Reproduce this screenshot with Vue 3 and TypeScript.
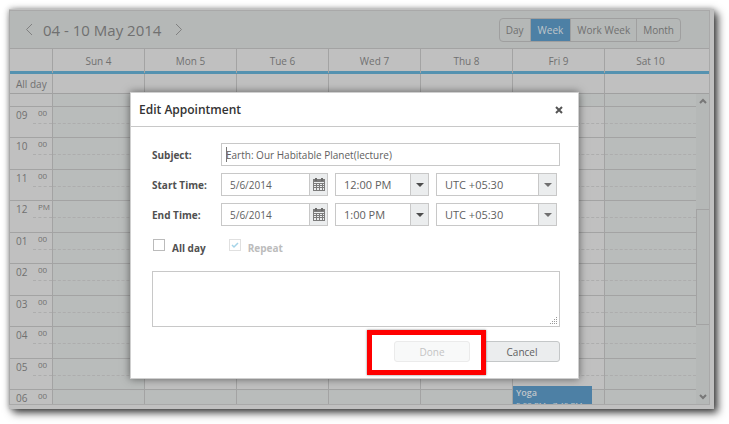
<script setup lang="ts">
import { ref } from 'vue'

type View = 'Day' | 'Week' | 'Work Week' | 'Month'

const views: View[] = ['Day', 'Week', 'Work Week', 'Month']
const activeView = ref<View>('Week')
const days = ['Sun 4', 'Mon 5', 'Tue 6', 'Wed 7', 'Thu 8', 'Fri 9', 'Sat 10']

interface Hour { label: string; suffix: string; working: boolean }
const hours: Hour[] = [
  { label: '09', suffix: '00', working: true },
  { label: '10', suffix: '00', working: true },
  { label: '11', suffix: '00', working: true },
  { label: '12', suffix: 'PM', working: true },
  { label: '01', suffix: '00', working: true },
  { label: '02', suffix: '00', working: true },
  { label: '03', suffix: '00', working: true },
  { label: '04', suffix: '00', working: true },
  { label: '05', suffix: '00', working: true },
  { label: '06', suffix: '00', working: false },
]

const subject = ref('Earth: Our Habitable Planet(lecture)')
const slots = ref([
  { id: 'start', label: 'Start Time:', date: '5/6/2014', time: '12:00 PM', zone: 'UTC +05:30' },
  { id: 'end', label: 'End Time:', date: '5/6/2014', time: '1:00 PM', zone: 'UTC +05:30' },
])
const allDay = ref(false)
const repeat = ref(true)
const notes = ref('')

const isWeekend = (index: number) => index === 0 || index === 6
</script>

<template>
  <div class="page">
    <div class="frame">
      <section class="scheduler">
        <header class="toolbar">
          <button class="nav" type="button" aria-label="Previous week">
            <svg width="8" height="13" viewBox="0 0 8 13"><path d="M7 1 1.5 6.5 7 12" /></svg>
          </button>
          <h1>04 - 10 May 2014</h1>
          <button class="nav" type="button" aria-label="Next week">
            <svg width="8" height="13" viewBox="0 0 8 13"><path d="M1 1 6.5 6.5 1 12" /></svg>
          </button>
          <div class="views">
            <button
              v-for="view in views"
              :key="view"
              type="button"
              :class="{ active: view === activeView }"
              @click="activeView = view"
            >{{ view }}</button>
          </div>
        </header>

        <div class="row day-row">
          <div></div>
          <div v-for="day in days" :key="day" class="day">{{ day }}</div>
        </div>
        <div class="row all-day-row">
          <div class="all-day">All day</div>
          <div v-for="day in days" :key="day" class="day"></div>
        </div>

        <div class="body">
          <div class="hours">
            <div class="hour-row">
              <div class="time"></div>
              <div v-for="day in days" :key="day" class="cell off"></div>
            </div>
            <div v-for="hour in hours" :key="hour.label" class="hour-row">
              <div class="time half">
                <span>{{ hour.label }}</span><small>{{ hour.suffix }}</small>
              </div>
              <div
                v-for="(day, i) in days"
                :key="day"
                class="cell half"
                :class="{ off: isWeekend(i) || !hour.working }"
              >
                <div v-if="hour.label === '05' && day === 'Fri 9'" class="event">
                  <strong>Yoga</strong>
                  <span>5:50 PM - 7:45 PM</span>
                </div>
              </div>
            </div>
          </div>
          <div class="scrollbar">
            <button type="button" aria-label="Scroll up">
              <svg width="8" height="6" viewBox="0 0 8 6"><path d="M1 5 4 2l3 3" /></svg>
            </button>
            <div class="track"><div class="thumb"></div></div>
            <button type="button" aria-label="Scroll down">
              <svg width="8" height="6" viewBox="0 0 8 6"><path d="M1 1l3 3 3-3" /></svg>
            </button>
          </div>
        </div>
      </section>
    </div>

    <form class="dialog" role="dialog" aria-labelledby="dialog-title" @submit.prevent>
      <header class="dialog-head">
        <h2 id="dialog-title">Edit Appointment</h2>
        <button type="button" class="close" aria-label="Close">
          <svg width="8" height="8" viewBox="0 0 8 8"><path d="M1 1l6 6M7 1 1 7" /></svg>
        </button>
      </header>
      <div class="dialog-body">
        <div class="field">
          <label for="subject">Subject:</label>
          <div class="box subject">
            <input id="subject" v-model="subject" type="text" />
            <i class="caret"></i>
          </div>
        </div>
        <div v-for="slot in slots" :key="slot.id" class="field">
          <label :for="slot.id">{{ slot.label }}</label>
          <div class="box date">
            <input :id="slot.id" v-model="slot.date" type="text" />
            <button type="button" class="addon" aria-label="Pick a date">
              <svg width="12" height="13" viewBox="0 0 12 13">
                <path d="M0 1h12v12H0z" fill="#7c7c7c" />
                <path d="M2 0h2v3H2zM8 0h2v3H8z" fill="#6b6b6b" />
                <path d="M1 4h10v1H1zM1 6h2v1H1zM4 6h2v1H4zM7 6h2v1H7zM10 6h1v1h-1zM1 8h2v1H1zM4 8h2v1H4zM7 8h2v1H7zM10 8h1v1h-1zM1 10h2v2H1zM4 10h2v2H4zM7 10h2v2H7zM10 10h1v2h-1z" fill="#ebedee" />
              </svg>
            </button>
          </div>
          <div class="box time-box">
            <select v-model="slot.time" aria-label="Time">
              <option>12:00 PM</option>
              <option>1:00 PM</option>
            </select>
            <span class="addon"><svg width="8" height="4" viewBox="0 0 8 4"><path d="M0 0h8L4 4z" fill="#4c4c4c" /></svg></span>
          </div>
          <div class="box zone">
            <select v-model="slot.zone" aria-label="Time zone">
              <option>UTC +05:30</option>
            </select>
            <span class="addon"><svg width="8" height="4" viewBox="0 0 8 4"><path d="M0 0h8L4 4z" fill="#707070" /></svg></span>
          </div>
        </div>
        <div class="checks">
          <label><input v-model="allDay" type="checkbox" /><span>All day</span></label>
          <label class="disabled"><input v-model="repeat" type="checkbox" disabled /><span>Repeat</span></label>
        </div>
        <div class="notes">
          <textarea v-model="notes" aria-label="Description"></textarea>
          <svg width="8" height="8" viewBox="0 0 8 8"><path d="M6 0h1v1H6zM4 2h1v1H4zM6 2h1v1H6zM2 4h1v1H2zM4 4h1v1H4zM6 4h1v1H6zM0 6h1v1H0zM2 6h1v1H2zM4 6h1v1H4zM6 6h1v1H6z" fill="#999" /></svg>
        </div>
        <footer class="actions">
          <div class="done">
            <button type="submit" disabled>Done</button>
            <span class="highlight"></span>
          </div>
          <button type="button">Cancel</button>
        </footer>
      </div>
    </form>
  </div>
</template>

<style>
body {
  background: #fff;
}
</style>

<style scoped>
* {
  box-sizing: border-box;
}
.page {
  position: relative;
  height: 100vh;
  padding: 9px 15px 15px 9px;
  font: 10px/16px "Open Sans", "Noto Sans", sans-serif;
  color: #707070;
}
button,
input,
select,
textarea {
  font: inherit;
  color: inherit;
  margin: 0;
  padding: 0;
  border: 0;
  background: none;
  border-radius: 0;
  outline: none;
}
svg {
  display: block;
}
.frame {
  height: 100%;
  padding: 1px 4px 4px 0;
  background: #c0c0c0;
  box-shadow: 4px 4px 8px rgba(0, 0, 0, 0.7), 0 0 6px rgba(0, 0, 0, 0.35);
}
.scheduler {
  height: 100%;
  display: flex;
  flex-direction: column;
  border: 1px solid #a9a9a9;
  background: #c0c0c0;
}
.toolbar {
  flex: none;
  display: flex;
  align-items: center;
  height: 38px;
  padding: 0 28px 0 15px;
  border-bottom: 1px solid #a3a3a3;
  background: #b5b8b7;
}
.nav path {
  fill: none;
  stroke: #808080;
}
.toolbar h1 {
  margin: 0 14px 0 10px;
  font-size: 15px;
  line-height: 22px;
  font-weight: 400;
  color: #707070;
}
.views {
  display: flex;
  height: 24px;
  margin-left: auto;
  border: 1px solid #9f9f9f;
  border-radius: 4px;
  overflow: hidden;
}
.views button {
  padding: 0 6px;
}
.views button + button {
  border-left: 1px solid #a0a0a0;
}
.views .active {
  padding: 0 7px;
  background: #4d80a5;
  color: #c0c6ca;
}
.row {
  flex: none;
  display: grid;
  grid-template-columns: 42px repeat(7, 1fr);
  padding-right: 13px;
}
.row .day {
  border-left: 1px solid #a3a3a3;
  text-align: center;
}
.day-row {
  height: 25px;
  line-height: 24px;
  border-bottom: 3px solid #5592b0;
}
.all-day-row {
  height: 20px;
  line-height: 20px;
  border-bottom: 1px solid #a0a0a0;
}
.all-day {
  padding-left: 6px;
  white-space: nowrap;
}
.body {
  flex: 1;
  min-height: 0;
  display: flex;
  overflow: hidden;
}
.hours {
  flex: 1;
  display: grid;
  grid-template-rows: 13px;
  grid-auto-rows: 31px 32px;
}
.hour-row {
  display: grid;
  grid-template-columns: 42px repeat(7, 1fr);
  border-bottom: 1px solid #a3a3a3;
}
.cell {
  position: relative;
  border-left: 1px solid #a3a3a3;
}
.off {
  background: #b9bcbb;
}
.half::before {
  content: "";
  display: block;
  height: 16px;
  border-bottom: 1px dashed #adadad;
}
.time {
  display: grid;
  grid-template-columns: 23px 19px;
  color: #707070;
}
.time.half::before {
  grid-area: 1 / 2;
}
.time span {
  grid-area: 1 / 1;
  padding-left: 6px;
  height: 16px;
  line-height: 16px;
}
.time small {
  grid-area: 1 / 2;
  padding-left: 5px;
  font-size: 8px;
  line-height: 12px;
}
.event {
  position: absolute;
  z-index: 1;
  top: 27px;
  left: 0;
  width: 79px;
  height: 60px;
  padding: 1px 3px;
  background: #4d80a5;
  color: #c0c6ca;
  font-size: 8px;
  line-height: 11px;
  white-space: nowrap;
}
.event strong,
.event span {
  display: block;
}
.event strong {
  font-size: 9px;
  line-height: 12px;
  font-weight: 600;
}
.scrollbar {
  flex: none;
  width: 13px;
  display: flex;
  flex-direction: column;
  background: #b5b8b7;
}
.scrollbar button {
  height: 14px;
  display: grid;
  place-items: center;
}
.scrollbar path {
  fill: none;
  stroke: #777;
  stroke-width: 2;
}
.track {
  flex: 1;
  display: grid;
  grid-template-rows: 101fr 117fr 65fr;
}
.thumb {
  grid-row: 2;
  border: 1px solid #a3a3a3;
  border-right: 0;
}
.dialog {
  position: absolute;
  top: 92px;
  left: 130px;
  width: 449px;
  border: 1px solid #cfcfcf;
  background: #fff;
  color: #606060;
  box-shadow: 0 0 8px rgba(0, 0, 0, 0.5);
}
.dialog-head {
  display: flex;
  align-items: center;
  justify-content: space-between;
  height: 34px;
  padding: 0 15px 0 8px;
  border-bottom: 1px solid #c8c8c8;
}
.dialog-head h2 {
  margin: 0;
  font-size: 12px;
  line-height: 16px;
  font-weight: 600;
  color: #333;
}
.close path {
  stroke: #555;
  stroke-width: 2;
}
.dialog-body {
  padding: 16px 18px 16px 21px;
}
.field {
  display: flex;
  gap: 7px;
  height: 23px;
  margin-bottom: 7px;
}
.field > label {
  flex: none;
  width: 62px;
  line-height: 25px;
  font-weight: 700;
  color: #505050;
}
.box {
  flex: none;
  display: grid;
  grid-template-columns: 1fr 18px;
  border: 1px solid #c8c8c8;
  background: #fff;
}
.box input,
.box select {
  grid-area: 1 / 1;
  min-width: 0;
  width: 100%;
  padding-left: 8px;
}
.box select {
  grid-area: 1 / 1 / 2 / 3;
  appearance: none;
  font-size: 11px;
}
.box .addon {
  grid-area: 1 / 2;
  display: grid;
  place-items: center;
  border-left: 1px solid #c8c8c8;
  background: #ebedee;
  pointer-events: none;
}
.box.subject {
  flex: 1;
  grid-template-columns: 1fr;
}
.box.subject input {
  padding-left: 4px;
}
.caret {
  grid-area: 1 / 1;
  width: 1px;
  height: 15px;
  margin: 3px 0 0 4px;
  background: #777;
}
.date {
  width: 107px;
}
.time-box {
  width: 94px;
}
.zone {
  width: 121px;
}
.checks {
  display: flex;
  gap: 23px;
  padding: 6px 0 0 1px;
  height: 38px;
}
.checks label {
  display: flex;
  gap: 7px;
  height: 16px;
  font-weight: 700;
  color: #505050;
}
.checks span {
  padding-top: 1px;
}
.checks input {
  appearance: none;
  width: 12px;
  height: 12px;
  border: 1px solid #bbb;
  background: #fff;
}
.checks .disabled {
  color: #bcbcbc;
}
.checks .disabled input {
  border-color: #e0e0e0;
  background: #fff url("data:image/svg+xml,%3Csvg xmlns='http://www.w3.org/2000/svg' viewBox='0 0 10 10'%3E%3Cpath d='M2 5l2 2 4-4' fill='none' stroke='%23a5d4e8' stroke-width='1.5'/%3E%3C/svg%3E") center / 10px 10px no-repeat;
}
.notes {
  display: grid;
}
.notes textarea {
  grid-area: 1 / 1;
  height: 56px;
  padding: 4px;
  border: 1px solid #c8c8c8;
  resize: none;
}
.notes svg {
  grid-area: 1 / 1;
  place-self: end;
  margin: 0 2px 2px 0;
}
.actions {
  display: flex;
  justify-content: flex-end;
  gap: 14px;
  margin-top: 14px;
}
.actions button {
  width: 76px;
  height: 21px;
  border: 1px solid #c4c7c8;
  border-radius: 3px;
  background: #ebedee;
}
.actions button:disabled {
  border-color: #ebebeb;
  background: #f8f9f9;
  color: #c4c4c4;
}
.done {
  position: relative;
}
.highlight {
  position: absolute;
  inset: -11px -16px -13px -27px;
  border: 5px solid #f00;
  box-shadow: 0 0 2px rgba(0, 0, 0, 0.5);
  pointer-events: none;
}
</style>
